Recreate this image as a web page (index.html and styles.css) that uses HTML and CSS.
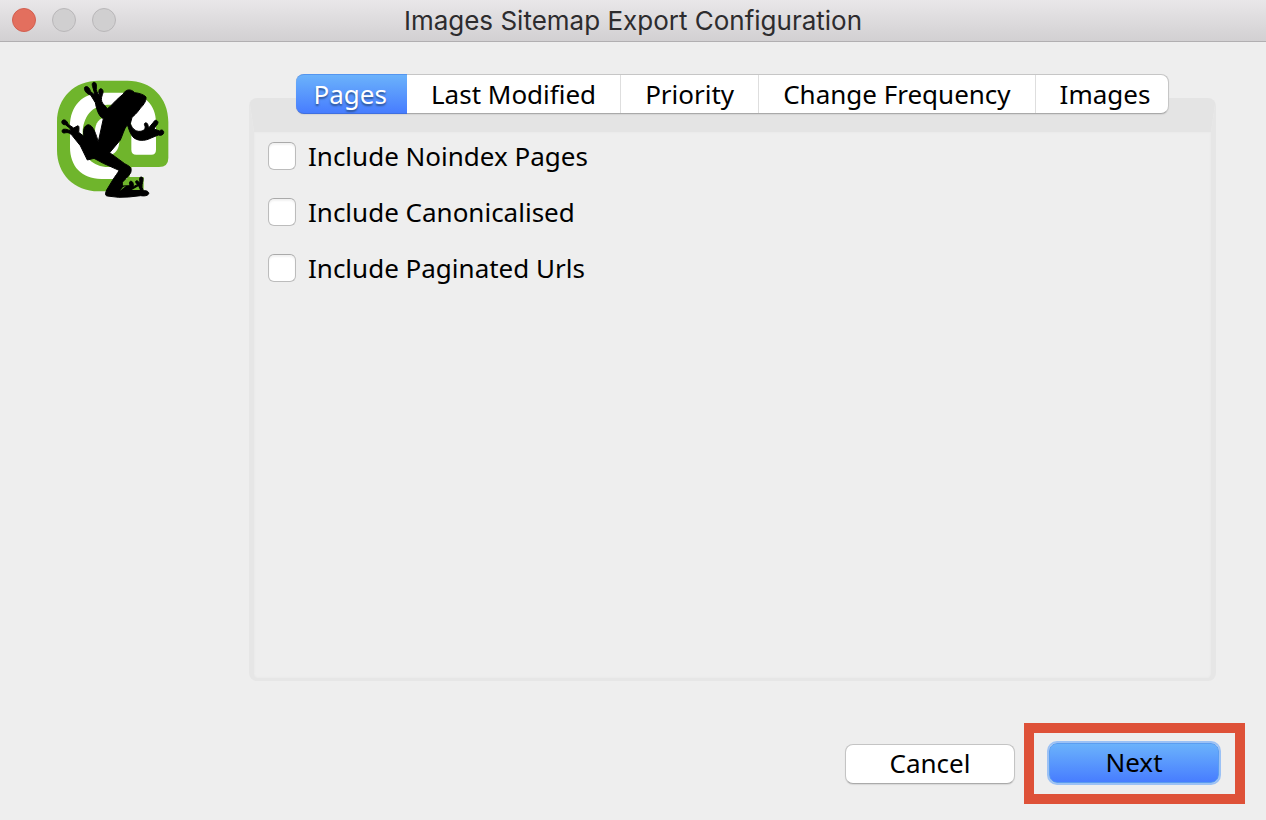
FILE: index.html
```html
<!DOCTYPE html>
<html lang="en">
<head>
	<meta charset="utf-8">
	<title>Images Sitemap Export Configuration</title>
	<link rel="stylesheet" href="styles.css">
</head>
<body>
	<header class="titlebar">
		<div class="lights">
			<button type="button" class="light close" aria-label="Close"></button>
			<button type="button" class="light" aria-label="Minimise" disabled></button>
			<button type="button" class="light" aria-label="Zoom" disabled></button>
		</div>
		<h1>Images Sitemap Export Configuration</h1>
	</header>

	<main class="content">
		<div class="logo">
			<svg viewBox="51 30 336 354" aria-hidden="true">
				<!-- at sign -->
				<path fill="#6fb52c" d="M176 32H262C334 32 385 82 385 156V264Q385 291 357 291H275L268 321H311V364H176C102 364 51 312 51 240V156C51 82 104 32 176 32Z"/>
				<path fill="#fff" d="M186 68H254C314 68 348 106 348 156V239Q348 254 334 254H289Q274 254 274 239V170C274 130 246 104 204 104C156 104 128 142 128 190V210C128 260 158 291 205 291H245L262 327H184C124 327 90 288 90 232V168C90 108 128 68 186 68Z"/>
				<path fill="#fff" d="M203 142C178 142 165 160 165 184V210C165 236 182 256 205 256C225 256 238 236 238 214V142Z"/>
				<!-- frog -->
				<path stroke="#000" stroke-width="3" stroke-linejoin="round" d="M250 72C256 58 272 55 284 68C297 69 312 74 318 81C320 95 307 108 300 116C290 130 283 136 276 142L271 161C278 180 291 187 306 183C315 180 316 174 315 168C311 162 314 157 320 159C325 163 325 170 325 175L341 156C345 147 354 151 354 158C353 164 347 167 342 177L359 183C364 177 372 181 371 188C370 196 361 197 355 195L333 204C315 214 290 214 278 200C269 189 266 174 262 164C251 179 249 193 241 210L209 248L254 281C266 288 278 291 272 308C266 319 251 332 237 347L247 338L247 348L270 347C267 339 268 332 275 334C281 338 280 344 280 350L292 344C284 336 286 331 293 333L300 340L299 327C298 320 306 319 309 325C310 333 305 341 306 352L310 362C319 361 328 365 326 372C321 379 310 378 302 377L266 381L236 382L202 378C193 376 197 368 200 360L217 332C226 317 234 309 237 301L190 280L162 265L142 270L121 227L96 196C89 187 81 187 73 189C64 190 65 179 70 178C78 176 86 180 91 183L90 175L76 164C66 166 62 154 69 150C79 148 82 157 86 164L101 174L112 168C117 165 118 172 116 187L132 199C128 182 132 166 145 164C161 166 168 195 175 215L190 146C175 139 169 114 166 98L152 75C139 72 131 60 134 52C141 45 149 54 152 65L165 75L158 50C154 39 160 34 167 39C172 45 166 56 171 66L178 77C177 68 174 58 182 56C191 57 190 68 187 74C183 85 183 94 189 101L202 116L210 110C222 97 235 84 250 72Z"/>
				<path fill="#6fb52c" d="M240 362L258 348L249 351ZM275 360L295 349L300 360Z"/>
			</svg>
		</div>

		<section class="config">
			<div class="tabs" role="tablist" aria-label="Configuration">
				<button type="button" class="tab active" role="tab" id="tab-pages" aria-selected="true" aria-controls="pages">Pages</button>
				<button type="button" class="tab" role="tab" aria-selected="false">Last Modified</button>
				<button type="button" class="tab" role="tab" aria-selected="false">Priority</button>
				<button type="button" class="tab" role="tab" aria-selected="false">Change Frequency</button>
				<button type="button" class="tab" role="tab" aria-selected="false">Images</button>
			</div>
			<div class="panel" role="tabpanel" id="pages" aria-labelledby="tab-pages">
				<div class="option">
					<input type="checkbox" id="noindex">
					<label for="noindex">Include Noindex Pages</label>
				</div>
				<div class="option">
					<input type="checkbox" id="canonicalised">
					<label for="canonicalised">Include Canonicalised</label>
				</div>
				<div class="option">
					<input type="checkbox" id="paginated">
					<label for="paginated">Include Paginated Urls</label>
				</div>
			</div>
		</section>
	</main>

	<footer class="actions">
		<button type="button" class="button">Cancel</button>
		<div class="highlight">
			<button type="button" class="button next">Next</button>
		</div>
	</footer>
</body>
</html>
```
FILE: styles.css
```css
* {
	box-sizing: border-box;
}

body {
	display: flex;
	flex-direction: column;
	min-height: 100vh;
	margin: 0;
	background: #eee;
	color: #000;
	font-family: "Noto Sans", "Open Sans", sans-serif;
	font-size: 26px;
}

button {
	margin: 0;
	color: inherit;
	font: inherit;
}

.titlebar {
	display: grid;
	grid-template-columns: 1fr auto 1fr;
	align-items: center;
	height: 42px;
	border-bottom: 1px solid #b1afb1;
	background: linear-gradient(#e9e7e9, #d2d0d2);
}

.titlebar h1 {
	margin: 0;
	color: #2d2c2e;
	font-family: Inter, sans-serif;
	font-size: 26px;
	font-weight: 400;
	line-height: 42px;
}

.lights {
	display: flex;
	gap: 16px;
	padding: 0 0 2px 12px;
}

.light {
	width: 24px;
	height: 24px;
	padding: 0;
	border: 1px solid #b9b7b9;
	border-radius: 50%;
	background: #d0cfd0;
}

.close {
	border-color: #d25f50;
	background: #e36f5e;
}

.content {
	display: flex;
	flex: 1;
	padding: 32px 50px 0 57px;
}

.logo {
	flex: none;
	width: 192px;
	padding-top: 6px;
}

.logo svg {
	display: block;
	width: 112px;
	height: 118px;
}

.config {
	display: flex;
	flex: 1;
	flex-direction: column;
}

.tabs {
	z-index: 1;
	display: flex;
	align-self: center;
	height: 40px;
	margin-bottom: -16px;
	border: 1px solid #c6c6c6;
	border-bottom-color: #a9a9a9;
	border-radius: 8px;
	background: #fff;
	box-shadow: 0 1px 1px #d4d4d4;
}

.tab {
	padding: 0 24px;
	border: 0;
	border-left: 1px solid #dedede;
	background: none;
	line-height: 36px;
	white-space: nowrap;
}

.tab:last-child {
	padding-right: 18px;
}

.tab.active {
	margin: -1px 0 -1px -1px;
	padding: 0 20px 0 18px;
	border: 1px solid #5495ef;
	border-width: 1px 0;
	border-bottom-color: #3f6fe0;
	border-radius: 8px 0 0 8px;
	background: linear-gradient(#6bb2fb, #477dff);
	color: #fff;
	text-shadow: 0 2px 2px #2c5293;
}

.tab.active + .tab {
	border-left: 0;
}

.panel {
	display: flex;
	flex: 1;
	flex-direction: column;
	gap: 20px;
	padding: 6px 14px;
	border: 5px solid #e6e6e6;
	border-top: 34px solid #e4e4e4;
	border-bottom-width: 3px;
	border-radius: 8px;
	box-shadow: inset 0 0 2px #e4e4e4;
}

.option {
	display: flex;
	align-items: center;
	gap: 12px;
	line-height: 36px;
}

.option input {
	width: 28px;
	height: 28px;
	margin: 0;
	border: 1px solid #bcbcbc;
	border-top-color: #aaa;
	border-radius: 6px;
	appearance: none;
	background: #fff;
	box-shadow: inset 0 2px 2px #f2f2f2;
}

.option input:checked {
	background: #477dff;
}

.actions {
	display: flex;
	align-items: center;
	justify-content: flex-end;
	gap: 9px;
	padding: 42px 21px 16px;
}

.button {
	width: 170px;
	height: 40px;
	padding: 0 0 2px;
	border: 1px solid #c4c4c4;
	border-bottom-color: #aaa;
	border-radius: 8px;
	background: #fff;
	box-shadow: 0 1px 1px #d8d8d8;
	line-height: 36px;
}

.next {
	border-color: #5b9df0;
	background: linear-gradient(#6bb2fb, #477dff);
	box-shadow: 0 0 0 2px #9bc1f5;
}

.highlight {
	padding: 10px 16px 11px 15px;
	border: 10px solid #de5138;
	line-height: 0;
}
```
